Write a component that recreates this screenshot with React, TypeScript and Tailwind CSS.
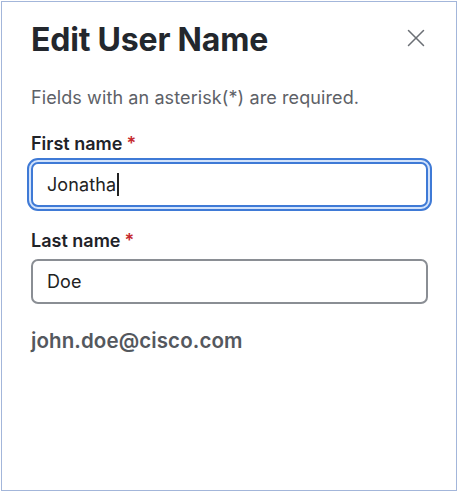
import { X } from 'lucide-react';

function Field({ label, value, focused }: { label: string; value: string; focused?: boolean }) {
  return (
    <div className="flex flex-col">
      <label className="text-[18px] font-semibold text-[#1f2328] leading-6 mb-[2px]">
        {label}
        <span className="text-[#c62a2f] ml-[4px]">*</span>
      </label>
      <div
        className={
          focused
            ? 'rounded-[11px] border-2 border-[#3f7ad6] bg-[#d3e3fb] p-[2px] -mx-[4px]'
            : 'p-[4px] -mx-[4px]'
        }
      >
        <div
          className={
            'h-[45px] rounded-[7px] border-2 bg-white flex items-center px-[14px] text-[18px] text-[#222] tracking-[0.1px] ' +
            (focused ? 'border-[#3f7ad6]' : 'border-[#8a8e94]')
          }
        >
          {value}
          {focused && <span className="w-[1.5px] h-[23px] bg-[#222] ml-[1px]" />}
        </div>
      </div>
    </div>
  );
}

export default function App() {
  return (
    <div className="w-[459px] h-[492px] bg-white pt-[1px] pl-[1px]" style={{ fontFamily: 'Inter, "Noto Sans", sans-serif' }}>
      <div className="w-[456px] h-[490px] border border-[#a3b6da] bg-white pl-[29px] pr-[28px] pt-[18px]">
        <div className="flex items-start justify-between">
          <h1 className="text-[32px] font-bold text-[#23272d] leading-[40px] tracking-[-0.2px]">Edit User Name</h1>
          <button className="mt-[3px] -mr-[3px] text-[#6b6f75]">
            <X size={30} strokeWidth={1.2} />
          </button>
        </div>
        <p className="mt-[26px] text-[18px] text-[#5d6167] leading-6 tracking-[0.1px]">Fields with an asterisk(*) are required.</p>
        <div className="mt-[22px] flex flex-col gap-[18px]">
          <Field label="First name" value="Jonatha" focused />
          <Field label="Last name" value="Doe" />
        </div>
        <p className="mt-[19px] text-[20.5px] font-semibold text-[#54585e] leading-7 tracking-[0.1px]">john.doe@cisco.com</p>
      </div>
    </div>
  );
}
